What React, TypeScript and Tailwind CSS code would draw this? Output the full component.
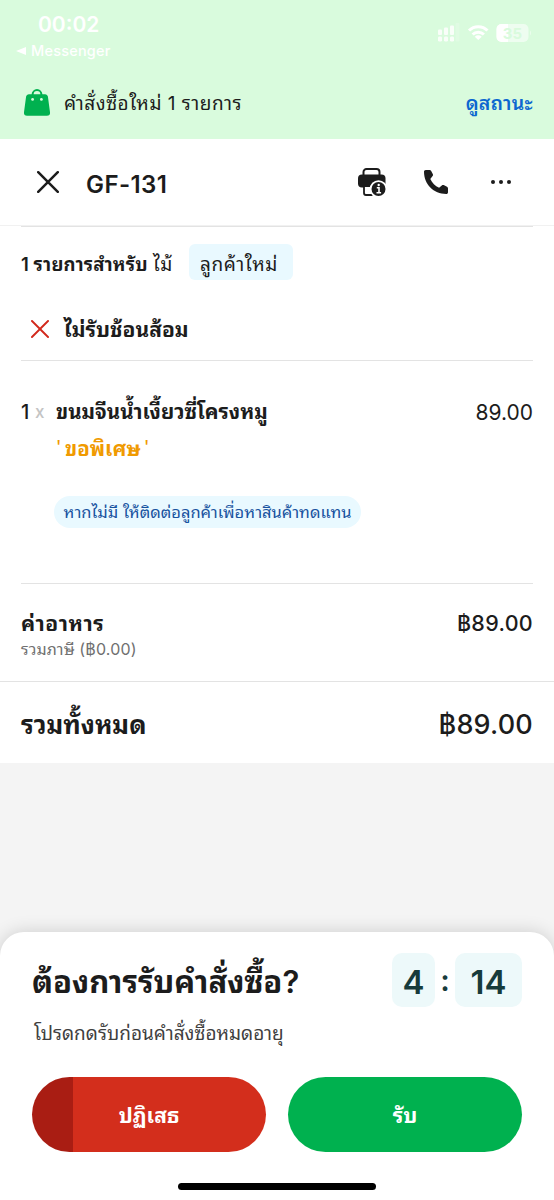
import type { ReactNode } from 'react';

interface TimerBoxProps {
  value: string;
  className: string;
}

function CloseIcon({ className }: { className: string }) {
  return (
    <svg viewBox="0 0 22 22" fill="none" stroke="currentColor" strokeLinecap="round" className={className}>
      <path d="M1.2 1.2 20.8 20.8M20.8 1.2 1.2 20.8" />
    </svg>
  );
}

function BagIcon() {
  return (
    <svg viewBox="0 0 26 28" className="h-7 w-[26px]">
      <path d="M8.6 8V5.500a4.400 4.400 0 0 1 8.800 0V8" fill="none" stroke="#00b14f" strokeWidth="2" />
      <path d="M5 5.200h16c1.600 0 2.600.9 2.900 2.400L26 23.200c.3 2.200-.9 3.500-3 3.500H3C.9 26.700-.3 25.400 0 23.200L2.100 7.600C2.400 6.100 3.400 5.200 5 5.200Z" fill="#00b14f" />
      <circle cx="8.600" cy="10.400" r="1.400" fill="#d9fbdd" />
      <circle cx="17.400" cy="10.400" r="1.400" fill="#d9fbdd" />
    </svg>
  );
}

function PrinterIcon() {
  return (
    <svg viewBox="0 0 30 30" className="h-[30px] w-[30px]">
      <path d="M6.500 9V5a3 3 0 0 1 3-3h10a3 3 0 0 1 3 3v4" fill="none" stroke="#1c1c1c" strokeWidth="2" />
      <rect x="1" y="7.500" width="27.500" height="13" rx="4" fill="#1c1c1c" />
      <path d="M7 19v7a2 2 0 0 0 2 2h7v-9Z" fill="#fff" stroke="#1c1c1c" strokeWidth="1.800" />
      <circle cx="21.500" cy="22" r="8.800" fill="#fff" />
      <circle cx="21.500" cy="22" r="7" fill="#1c1c1c" />
      <path d="M19.800 20.800h2.200v4.900M19.500 25.700h4.600" fill="none" stroke="#fff" strokeWidth="1.600" />
      <circle cx="21.700" cy="18" r="1.200" fill="#fff" />
    </svg>
  );
}

function PhoneIcon() {
  return (
    <svg viewBox="0 0 24 24" className="h-6 w-6" fill="#1c1c1c">
      <path d="M1.800 0h3.800c.7 0 1.200.3 1.600.9l1.700 3.300c.3.700.2 1.300-.3 1.900L6.300 8.900c1.900 4 4.800 6.900 8.800 8.800l2.700-2.300c.6-.5 1.300-.6 1.900-.3l3.300 1.700c.7.400 1 .9 1 1.600v3.800c0 1.100-.7 1.800-1.800 1.800C9.600 24 0 14.400 0 1.800 0 .7.700 0 1.800 0Z" />
    </svg>
  );
}

function StatusIcons() {
  return (
    <svg viewBox="0 0 94 20" className="h-5 w-[94px]" fill="#fff">
      <g opacity=".85">
        <rect x="1" y="6.500" width="4" height="5.500" rx="1" />
        <rect x="7" y="4.500" width="4" height="7.500" rx="1" />
        <rect x="13" y="2.500" width="4" height="9.500" rx="1" />
        <rect x="1" y="13.500" width="4" height="5" rx="1.200" />
        <rect x="7" y="13.500" width="4" height="5" rx="1.200" />
        <rect x="13" y="13.500" width="4" height="5" rx="1.200" />
      </g>
      <rect x="18.500" y="0" width="4" height="18.500" rx="1" opacity=".2" />
      <g fill="none" stroke="#fff" strokeWidth="3">
        <path d="M32 7.500a13 13 0 0 1 18.500 0M35.600 11.500a8 8 0 0 1 11.300 0" />
      </g>
      <path d="m41.250 17-3.500-3.200a5.500 5.500 0 0 1 7 0Z" />
      <rect x="59.500" y="1" width="32" height="18" rx="5" opacity=".55" />
      <path d="M64.500 1H71v18h-6.500a5 5 0 0 1-5-5V6a5 5 0 0 1 5-5Z" />
      <path d="M93 7.500v5q1-.7 1-2.500t-1-2.500Z" opacity=".5" />
      <text x="75.500" y="15.500" fontSize="15" fontWeight="700" textAnchor="middle" fill="#d9fbdd">35</text>
    </svg>
  );
}

function TimerBox({ value, className }: TimerBoxProps) {
  return (
    <div className={`flex h-[54px] items-center justify-center rounded-[10px] bg-[#edf9fa] pt-[5px] text-[33px] font-semibold ${className}`}>
      {value}
    </div>
  );
}

function Line({ children, className }: { children: ReactNode; className: string }) {
  return <div className={`whitespace-nowrap leading-none ${className}`}>{children}</div>;
}

export default function App() {
  return (
    <div className="flex h-[1200px] w-[554px] flex-col overflow-hidden bg-[#f4f4f4] font-[Inter,'Noto_Sans_Thai_Looped','Noto_Looped_Thai',Loma,'Noto_Sans_Thai',sans-serif] text-[#1c1c1c]">
      <div className="h-[139px] shrink-0 bg-[#d9fbdd]">
        <div className="flex h-[68px] justify-between pl-4 pr-[23px] text-white">
          <div className="pt-[14px]">
            <Line className="pl-[22px] text-[21px] font-semibold">00:02</Line>
            <Line className="flex items-center gap-[5px] pt-[9px] text-[14.500px] font-medium tracking-[0.2px]">
              <svg viewBox="0 0 10 8" className="h-2 w-[10px]" fill="#fff"><path d="M0 4 10 0v8Z" /></svg>
              Messenger
            </Line>
          </div>
          <div className="pt-[23px]"><StatusIcons /></div>
        </div>
        <div className="flex h-[70px] items-center pl-6 pr-[21px]">
          <BagIcon />
          <Line className="flex-1 pl-[14px] pt-px text-[19px] tracking-[0.5px]">คำสั่งซื้อใหม่ 1 รายการ</Line>
          <Line className="pt-px text-[19.500px] font-semibold tracking-[0.3px] text-[#0c67d0]">ดูสถานะ</Line>
        </div>
      </div>

      <header className="flex h-[87px] shrink-0 items-center border-b border-[#f1f1f1] bg-white pl-[37px] pr-[43px]">
        <CloseIcon className="h-[22px] w-[22px] stroke-[2.5]" />
        <Line className="flex-1 pl-[27px] pt-[5px] text-[24px] font-semibold tracking-[0.4px]">GF-131</Line>
        <PrinterIcon />
        <div className="pl-[37px]"><PhoneIcon /></div>
        <div className="flex gap-1 pl-[43px]">
          <i className="size-1 rounded-full bg-[#1c1c1c]" />
          <i className="size-1 rounded-full bg-[#1c1c1c]" />
          <i className="size-1 rounded-full bg-[#1c1c1c]" />
        </div>
      </header>

      <main className="h-[537px] shrink-0 bg-white">
        <section className="mx-[21px] h-[135px] border-y border-[#e3e3e3]">
          <div className="flex items-center pt-[17px]">
            <Line className="w-[132px] pt-1 text-[18.500px] font-bold tracking-[0.2px]"><span className="font-semibold">1</span> รายการสำหรับ</Line>
            <Line className="w-[36px] pt-1 text-[19px] tracking-[0.6px]">ไม้</Line>
            <Line className="flex h-[36px] w-[104px] items-center justify-center rounded-md bg-[#e9f9ff] pr-1 pt-[4px] text-[19px] tracking-[0.6px]">ลูกค้าใหม่</Line>
          </div>
          <div className="flex h-[98px] items-center pl-[10px]">
            <CloseIcon className="h-[18px] w-[18px] stroke-[2.3] text-[#d2291c]" />
            <Line className="pl-[15px] text-[21px] font-bold">ไม่รับช้อนส้อม</Line>
          </div>
        </section>

        <section className="mx-[21px] h-[223px] border-b border-[#e3e3e3] pt-[40px]">
          <div className="flex h-[22px] items-center">
            <Line className="w-[14px] text-[20px] font-medium">1</Line>
            <Line className="w-[21px] text-[17px] font-medium text-[#c4c4c4]">x</Line>
            <Line className="flex-1 text-[20.500px] font-bold">ขนมจีนน้ำเงี้ยวซี่โครงหมู</Line>
            <Line className="text-[21px]">89.00</Line>
          </div>
          <Line className="mt-[14px] flex h-[24px] items-center pl-[35px] text-[20.500px] font-semibold text-[#f09a00]">
            <span className="w-[9px] pb-1 text-[17px] font-medium">'</span>
            <span className="w-[79px] font-bold">ขอพิเศษ</span>
            <span className="pb-1 text-[17px] font-medium">'</span>
          </Line>
          <div className="ml-[33px] mt-[35px] flex h-[32px] w-[307px] items-center justify-center rounded-full bg-[#e9f9ff]">
            <Line className="pt-px text-[16.500px] text-[#1853a0]">หากไม่มี ให้ติดต่อลูกค้าเพื่อหาสินค้าทดแทน</Line>
          </div>
        </section>

        <section className="h-[98px] border-b border-[#e3e3e3] px-[21px] pt-[27px]">
          <div className="flex h-[24px] items-center justify-between font-medium">
            <Line className="text-[21px] font-bold tracking-[0.6px]">ค่าอาหาร</Line>
            <Line className="pt-0.5 text-[21.500px] tracking-[0.3px]">฿89.00</Line>
          </div>
          <Line className="flex h-[28px] items-center text-[16px] tracking-[0.15px] text-[#707070]">รวมภาษี (฿0.00)</Line>
        </section>
        <section className="flex h-[81px] items-center justify-between px-[21px] pt-[3px]">
          <Line className="pt-0.5 text-[25.500px] font-bold">รวมทั้งหมด</Line>
          <Line className="text-[27px] font-medium tracking-[0.2px]">฿89.00</Line>
        </section>
      </main>

      <footer className="mt-auto h-[268px] shrink-0 rounded-t-[24px] bg-white shadow-[0_0_18px_rgba(0,0,0,0.16)]">
        <div className="flex justify-between px-8 pt-[21px]">
          <div>
            <Line className="flex h-[56px] items-center text-[31px] font-bold">ต้องการรับคำสั่งซื้อ<span className="font-semibold">?</span></Line>
            <Line className="flex h-[44px] items-center pl-0.5 pt-1 text-[19px] text-[#3f3f3f]">โปรดกดรับก่อนคำสั่งซื้อหมดอายุ</Line>
          </div>
          <div className="flex h-[54px] items-center text-[#173b3b]">
            <TimerBox value="4" className="w-[43px]" />
            <span className="w-5 text-center text-[30px] font-semibold leading-none">:</span>
            <TimerBox value="14" className="w-[67px]" />
          </div>
        </div>
        <div className="mt-[24px] flex gap-[22px] px-8 text-[21px] font-bold text-white">
          <button className="h-[75px] w-[234px] rounded-full bg-[linear-gradient(to_right,#a91d13_41px,#d32e1c_41px)] pt-0.5">ปฏิเสธ</button>
          <button className="h-[75px] w-[234px] rounded-full bg-[#00b14f] pt-0.5">รับ</button>
        </div>
        <div className="mx-auto mt-[31px] h-[7px] w-[198px] rounded-full bg-black" />
      </footer>
    </div>
  );
}
